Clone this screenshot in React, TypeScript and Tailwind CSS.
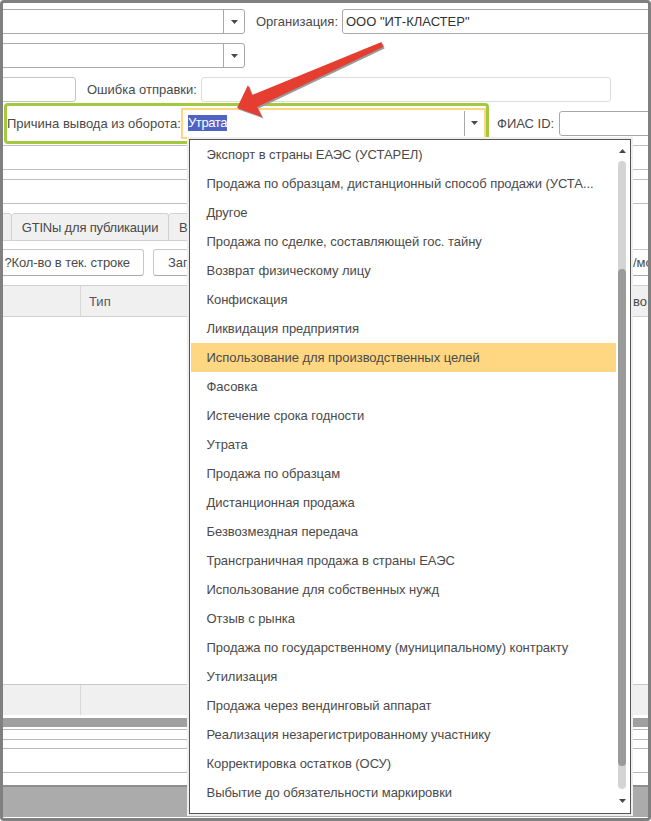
const items = [
  "Экспорт в страны ЕАЭС (УСТАРЕЛ)",
  "Продажа по образцам, дистанционный способ продажи (УСТА...",
  "Другое",
  "Продажа по сделке, составляющей гос. тайну",
  "Возврат физическому лицу",
  "Конфискация",
  "Ликвидация предприятия",
  "Использование для производственных целей",
  "Фасовка",
  "Истечение срока годности",
  "Утрата",
  "Продажа по образцам",
  "Дистанционная продажа",
  "Безвозмездная передача",
  "Трансграничная продажа в страны ЕАЭС",
  "Использование для собственных нужд",
  "Отзыв с рынка",
  "Продажа по государственному (муниципальному) контракту",
  "Утилизация",
  "Продажа через вендинговый аппарат",
  "Реализация незарегистрированному участнику",
  "Корректировка остатков (ОСУ)",
  "Выбытие до обязательности маркировки",
];

function Caret({ up = false }: { up?: boolean }) {
  return (
    <svg width="7" height="4" viewBox="0 0 7 4" className="block">
      <path d={up ? "M0 4 L3.5 0 L7 4 Z" : "M0 0 L7 0 L3.5 4 Z"} fill="#4a4a4a" />
    </svg>
  );
}

function ComboRow() {
  return (
    <div className="ml-[-6px] w-[248px] shrink-0 h-[25px] border border-[#a9a9a9] rounded-[3px] bg-white flex justify-end">
      <div className="w-[21px] border-l border-[#a9a9a9] flex items-center justify-center">
        <Caret />
      </div>
    </div>
  );
}

const arrow = "M151.5 2 L22 55 L18 45 L7 68 L32 77 L27 67 L153 7 Z";

export default function App() {
  return (
    <div className="relative w-[651px] h-[821px] overflow-hidden bg-white border-[3px] border-[#808080] rounded-[4px] text-[13px] leading-[15px] text-[#4a4a4a] font-['Liberation_Sans',Arial,sans-serif]">
      {/* Row 1 */}
      <div className="flex h-[25px] mt-[6px] items-center">
        <ComboRow />
        <span className="ml-[11px] w-[86px] shrink-0 whitespace-nowrap">Организация:</span>
        <div className="w-[320px] h-[25px] shrink-0 border border-[#a9a9a9] rounded-[3px] pl-[3px] flex items-center text-[#333]">
          ООО "ИТ-КЛАСТЕР"
        </div>
      </div>
      {/* Row 2 */}
      <div className="flex h-[25px] mt-[9px]">
        <ComboRow />
      </div>
      {/* Row 3 */}
      <div className="flex h-[25px] mt-[9px] items-center">
        <div className="ml-[-6px] w-[79px] shrink-0 h-[25px] border border-[#c4c4c4] rounded-[3px]" />
        <span className="ml-[11px] w-[114px] shrink-0 whitespace-nowrap">Ошибка отправки:</span>
        <div className="w-[410px] h-[25px] shrink-0 border border-[#dcdcdc] rounded-[3px]" />
      </div>
      {/* Row 4 */}
      <div className="flex items-center h-[42px]">
        <div className="ml-[1px] w-[485px] h-[41px] shrink-0 border-[3px] border-[#a2c940] rounded-[4px] flex items-center bg-white">
          <span className="w-[174px] shrink-0 whitespace-nowrap">Причина вывода из оборота:</span>
          <div className="flex-1 h-[31px] border-[2px] border-[#ffd782] flex items-center pl-[5px]">
            <span className="bg-[#4f63c4] text-white leading-[16px] tracking-[-0.4px]">Утрата</span>
            <div className="ml-auto w-[20px] h-[25px] border-l border-[#a9a9a9] flex items-center justify-center">
              <Caret />
            </div>
          </div>
        </div>
        <span className="ml-[8px] w-[62px] shrink-0 whitespace-nowrap">ФИАС ID:</span>
        <div className="w-[100px] h-[25px] shrink-0 border border-[#a9a9a9] rounded-[3px]" />
      </div>
      {/* Lines */}
      <div className="mt-[1px] h-[25px] border-y border-[#c0c0c0]" />
      <div className="mt-[9px] h-[25px] border-y border-[#c0c0c0]" />
      {/* Tabs */}
      <div className="mt-[9px] flex h-[28px] items-stretch">
        <div className="ml-[-6px] w-[15px] border border-[#d0d0d0] bg-[#f0f0f0] rounded-t-[3px]" />
        <div className="w-[157px] border border-l-0 border-[#d0d0d0] bg-[#f0f0f0] rounded-t-[3px] flex items-center justify-center whitespace-nowrap tracking-[-0.2px]">GTINы для публикации</div>
        <div className="w-[60px] border border-l-0 border-[#d0d0d0] bg-[#f0f0f0] rounded-t-[3px] pl-[10px] flex items-center">В</div>
      </div>
      {/* Buttons */}
      <div className="mt-[8px] flex h-[27px] items-stretch">
        <div className="ml-[-8px] w-[149px] shrink-0 pr-[13px] border border-[#c8c8c8] border-b-[#aaaaaa] rounded-[3px] flex items-center justify-end whitespace-nowrap tracking-[-0.1px]">?Кол-во в тек. строке</div>
        <div className="ml-[9px] w-[60px] shrink-0 border border-[#c8c8c8] border-b-[#aaaaaa] rounded-[3px] pl-[14px] flex items-center">Заг</div>
        <div className="ml-auto w-[15px] shrink-0 border-y border-[#c8c8c8] border-b-[#aaaaaa] flex items-center overflow-hidden whitespace-nowrap">/мо</div>
      </div>
      {/* Table */}
      <div className="mt-[9px] h-[32px] border-y border-[#d0d0d0] bg-[#f0f0f0] flex items-center">
        <div className="w-[78px] h-full border-r border-[#d8d8d8] shrink-0" />
        <span className="ml-[8px] text-[#555]">Тип</span>
        <span className="ml-auto w-[15px] overflow-hidden whitespace-nowrap">во</span>
      </div>
      <div className="h-[367px] bg-white" />
      <div className="h-[31px] border-t border-[#c8c8c8] bg-[#f0f0f0] flex">
        <div className="w-[78px] h-full border-r border-[#d8d8d8] shrink-0" />
      </div>
      <div className="mt-[3px] h-[9px] bg-[#a0a0a0]" />
      <div className="mt-[2px] h-[11px] border-y border-[#b8b8b8]" />
      <div className="mt-[8px] h-[25px] border-y border-[#b8b8b8]" />
      <div className="mt-[12px] h-[32px] border-t-2 border-[#8e8e8e] bg-[#ababab]" />

      {/* Dropdown list */}
      <div className="absolute left-[186px] top-[136px] w-[442px] h-[675px] bg-white border-[1.5px] border-[#555] shadow-[0_0_0_2px_#eeeeee]">
        <div className="pl-[0.5px] tracking-[-0.04px]">
          {items.map((t, i) => (
            <div key={t} className={`h-[29px] pl-[16px] flex items-center whitespace-nowrap ${i === 7 ? "w-[425px] bg-[#ffd782]" : ""}`}>
              {t}
            </div>
          ))}
        </div>
        <div className="absolute left-[428px] top-0 bottom-0 w-[8px] flex flex-col items-center">
          <div className="mt-[9px]"><Caret up /></div>
          <div className="relative mt-[8px] w-[8px] h-[628px] shrink-0 bg-[#d4d4d4] rounded-[4px]">
            <div className="absolute top-[108px] left-0 w-[8px] h-[497px] bg-[#9a9a9a] rounded-[4px]" />
          </div>
          <div className="mt-[10px]"><Caret /></div>
        </div>
      </div>

      {/* Red arrow */}
      <svg className="absolute left-[227px] top-[37px]" width="160" height="85" viewBox="0 0 160 85">
        <path d={arrow} transform="translate(1.5 1.5)" fill="#9a9a9a" />
        <path d={arrow} fill="#e53e31" />
      </svg>
    </div>
  );
}
